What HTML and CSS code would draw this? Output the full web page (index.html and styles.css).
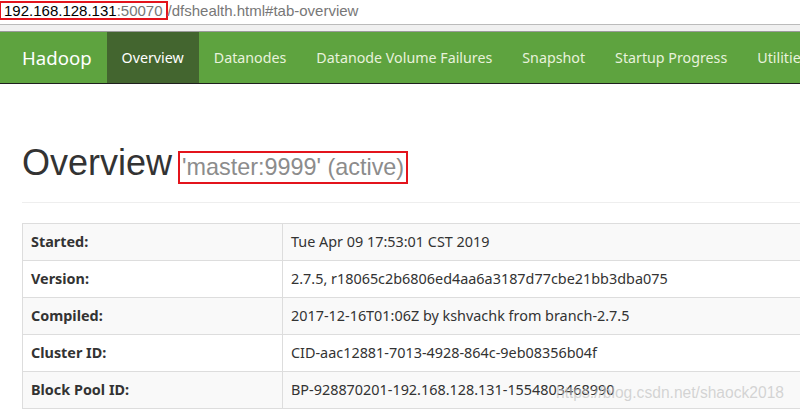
FILE: index.html
```html
<!DOCTYPE html>
<html lang="en">
<head>
    <meta charset="UTF-8">
    <meta name="viewport" content="width=device-width, initial-scale=1.0">
    <title>Namenode information</title>
    <link rel="stylesheet" href="styles.css">
</head>
<body>
    <div class="address-bar">
        <span class="host-box"><span class="host">192.168.128.131</span>:50070</span>/dfshealth.html#tab-overview
    </div>
    <div class="chrome-gap"></div>

    <nav class="navbar">
        <span class="brand">Hadoop</span>
        <ul class="nav-links">
            <li class="active">Overview</li>
            <li>Datanodes</li>
            <li>Datanode Volume Failures</li>
            <li>Snapshot</li>
            <li>Startup Progress</li>
            <li>Utilities</li>
        </ul>
    </nav>

    <div class="container">
        <div class="page-header">
            <h1>Overview <small class="marked">'master:9999' (active)</small></h1>
        </div>

        <table class="overview-table">
            <tbody>
                <tr><th>Started:</th><td>Tue Apr 09 17:53:01 CST 2019</td></tr>
                <tr><th>Version:</th><td>2.7.5, r18065c2b6806ed4aa6a3187d77cbe21bb3dba075</td></tr>
                <tr><th>Compiled:</th><td>2017-12-16T01:06Z by kshvachk from branch-2.7.5</td></tr>
                <tr><th>Cluster ID:</th><td>CID-aac12881-7013-4928-864c-9eb08356b04f</td></tr>
                <tr><th>Block Pool ID:</th><td>BP-928870201-192.168.128.131-1554803468990</td></tr>
            </tbody>
        </table>
    </div>

    <div class="watermark">https://blog.csdn.net/shaock2018</div>
</body>
</html>
```

FILE: styles.css
```css
html, body {
    margin: 0;
    overflow: hidden;
}

body {
    font-family: "Noto Sans", "Open Sans", sans-serif;
    font-size: 14px;
    color: #333;
    background: #fff;
    width: 800px;
    height: 410px;
    position: relative;
}

/* browser address bar */
.address-bar {
    height: 24px;
    line-height: 22px;
    font-family: "Liberation Sans", Arial, sans-serif;
    font-size: 15px;
    color: #777;
    padding-left: 3px;
    border-bottom: 1px solid #bbb;
    white-space: nowrap;
}
.host-box {
    display: inline-block;
    margin-left: -3px;
    padding: 0 3px 0 3px;
    line-height: 15px;
    border: 2px solid #e3141c;
    border-left-width: 1px;
}
.host {
    color: #000;
}
.chrome-gap {
    height: 6px;
    background: #f0f0f0;
    border-bottom: 1px solid #9a9a9a;
}

/* green navbar */
.navbar {
    display: flex;
    height: 51px;
    line-height: 51px;
    background: #5ea33f;
    border-bottom: 1px solid #1f1f1f;
    padding-left: 7px;
    white-space: nowrap;
    overflow: hidden;
}
.brand {
    padding: 0 15px;
    font-size: 18.6px;
    color: #fff;
}
.nav-links {
    display: flex;
    list-style: none;
    margin: 0;
    padding: 0;
}
.nav-links li {
    padding: 0 15px;
    font-size: 14.25px;
    color: #e8f2dc;
}
.nav-links li.active {
    background: #43652f;
    color: #fff;
}

.container {
    width: 1000px;
    padding-left: 22px;
}

.page-header {
    margin-top: 59px;
    padding-bottom: 18px;
    border-bottom: 1px solid #eee;
}
h1 {
    margin: 0;
    font-family: "Liberation Sans", Arial, sans-serif;
    font-size: 36px;
    font-weight: normal;
    line-height: 40px;
    color: #333;
}
h1 small {
    font-size: 23.4px;
    color: #8c8c8c;
}
.marked {
    display: inline-block;
    line-height: 26px;
    padding: 1px 2px 2px 2px;
    border: 2px solid #e3141c;
    margin-left: -4px;
}

.overview-table {
    margin-top: 20px;
    width: 100%;
    border-collapse: collapse;
    border: 1px solid #ddd;
    font-size: 14.4px;
}
.overview-table th,
.overview-table td {
    border: 1px solid #ddd;
    padding: 8px;
    line-height: 20px;
    text-align: left;
}
.overview-table th {
    width: 243px;
    font-weight: bold;
}
.overview-table tr:nth-child(odd) {
    background: #f9f9f9;
}

.watermark {
    position: absolute;
    left: 556px;
    top: 384px;
    font-family: "Liberation Sans", Arial, sans-serif;
    font-size: 15.6px;
    color: rgba(195, 195, 195, 0.7);
}
```
